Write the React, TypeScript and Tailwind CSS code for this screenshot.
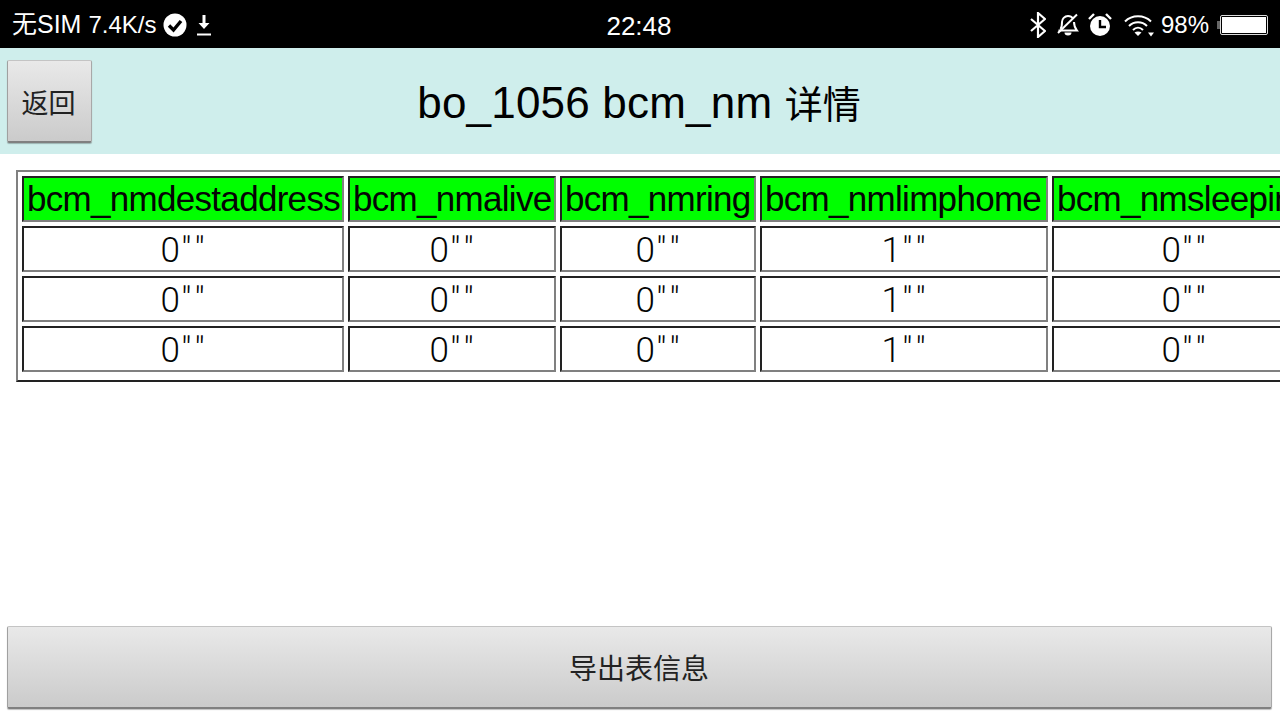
import React from "react";

const font = { fontFamily: '"Liberation Sans","Noto Sans CJK SC",sans-serif' };
const digit = { fontFamily: 'Roboto,"Liberation Sans",sans-serif' };
const widths = ["w-[322px]", "w-[208px]", "w-[196px]", "w-[288px]", "w-[264px]"];
const heads = ["bcm_nmdestaddress", "bcm_nmalive", "bcm_nmring", "bcm_nmlimphome", "bcm_nmsleepind"];
const rows = [
  ["0", "0", "0", "1", "0"],
  ["0", "0", "0", "1", "0"],
  ["0", "0", "0", "1", "0"],
];
const btn =
  "border border-[#c4c4c4] border-b-2 border-b-[#808080] border-r-[#a8a8a8] border-l-[#a0a0a0] rounded-[2px] bg-gradient-to-b from-[#e9e9e9] to-[#cbcbcb] shadow-[0_1px_1px_rgba(0,0,0,0.25)] text-[#222]";
const cell =
  "border-2 border-t-[#222] border-l-[#222] border-b-[#808080] border-r-[#808080] p-0 whitespace-nowrap overflow-hidden";

function StatusLeft() {
  return (
    <div className="flex items-center text-[25px] text-white pl-3 pt-[1px]">
      <span>无SIM</span>
      <span className="ml-[7px] text-[24px]">7.4K/s</span>
      <svg className="ml-[6px]" width="24" height="24" viewBox="0 0 24 24">
        <circle cx="12" cy="12" r="11.500" fill="#fff" />
        <path d="M6 12.500l4.500 4.500 7.500-9" fill="none" stroke="#000" strokeWidth="3.400" />
      </svg>
      <svg className="ml-[8px]" width="18" height="24" viewBox="0 0 18 24">
        <path d="M7.500 2h3v8h4l-5.500 6-5.500-6h4z" fill="#fff" />
        <rect x="2" y="20.500" width="14" height="2" fill="#fff" />
      </svg>
    </div>
  );
}

function StatusRight() {
  return (
    <div className="flex items-center text-white text-[24px] pt-[1px]">
      <svg width="16" height="26" viewBox="0 0 16 26" fill="none" stroke="#fff" strokeWidth="2.200">
        <path d="M1 7l14 12-7 6V1l7 6L1 19" />
      </svg>
      <svg className="ml-[11px]" width="22" height="24" viewBox="0 0 22 24" fill="none" stroke="#fff" strokeWidth="2">
        <path d="M3.500 16c1.500-2 1.500-4 1.500-7 0-3 2.500-6 6-6 2.500 0 4 1 5 2.500M17 9c0 3 1 6 3 8.500H1.500" />
        <path d="M1 20L20 1.500" />
        <path d="M7.500 19.500a3.500 3 0 0 0 7 0z" fill="#fff" stroke="none" />
      </svg>
      <svg className="ml-[9px]" width="24" height="26" viewBox="0 0 24 26">
        <circle cx="12" cy="14" r="10" fill="#fff" />
        <path d="M12 8v7h6" fill="none" stroke="#000" strokeWidth="2.400" />
        <path d="M1 7l5-5M23 7l-5-5" stroke="#fff" strokeWidth="2.400" fill="none" />
      </svg>
      <svg className="ml-[12px]" width="30" height="24" viewBox="0 0 30 24" fill="none" stroke="#fff" strokeWidth="2">
        <path d="M1 8.500c7-7 19-7 26 0M5 13c5-5 13-5 18 0M9 17c3-3 7-3 10 0" />
        <path d="M14 23l-3.500-3.500c2-1.500 5-1.500 7 0z" fill="#fff" stroke="none" />
        <path d="M24 19.500h6l-3 4z" fill="#fff" stroke="none" />
      </svg>
      <span className="ml-[7px]">98%</span>
      <div className="ml-[8px] mr-[12px] flex items-center">
        <div className="w-[3px] h-[8px] bg-[#666]" />
        <div className="w-[48px] h-[20px] rounded-[2px] bg-black border border-[#ddd] p-[1px]">
          <div className="w-full h-full bg-white" />
        </div>
      </div>
    </div>
  );
}

export default function App() {
  return (
    <div className="w-[1280px] h-[720px] bg-white overflow-hidden flex flex-col" style={font}>
      <div className="h-[48px] bg-black flex items-center justify-between relative">
        <StatusLeft />
        <div className="absolute left-0 right-[2px] top-[9px] leading-[34px] text-center text-white text-[26px]">22:48</div>
        <StatusRight />
      </div>
      <div className="h-[106px] bg-[#cfeeec] flex items-center relative">
        <button className={`ml-[7px] mt-[1px] w-[85px] h-[83px] text-[27px] pt-[6px] pr-[2px] ${btn}`}>返回</button>
        <div className="absolute left-0 right-[2px] top-[30px] leading-[50px] text-center text-[44px] tracking-[0.2px] text-black">
          bo_1056 bcm_nm <span className="text-[38px] tracking-normal">详情</span>
        </div>
      </div>
      <div className="flex-1 min-h-0 pt-[16px] pl-[16px] overflow-hidden">
        <div className="w-[1306px] pb-[4px] border-2 border-t-[#808080] border-l-[#808080] border-b-[#222] border-r-[#222]">
          <table className="border-separate border-spacing-[4px] w-[1302px] table-fixed text-[35px] tracking-[-0.7px] text-[#050505]">
            <thead>
              <tr className="h-[46px]">
                {heads.map((h, i) => (
                  <th key={h} className={`${cell} ${widths[i]} bg-[#00ff00] font-normal text-left pl-[3px] leading-[38px]`}>
                    {h}
                  </th>
                ))}
              </tr>
            </thead>
            <tbody>
              {rows.map((r, ri) => (
                <tr key={ri} className="h-[46px]">
                  {r.map((c, i) => (
                    <td key={i} className={`${cell} text-center leading-[38px] pt-[4px] pl-[4px] font-light`} style={digit}>
                      {c}
                      <span className="ml-[2px] tracking-[5px]">""</span>
                    </td>
                  ))}
                </tr>
              ))}
            </tbody>
          </table>
        </div>
      </div>
      <div className="pl-[7px] pr-[8px] pb-[11px]">
        <button className={`w-full h-[83px] text-[28px] pt-[5px] pr-[1px] ${btn}`}>导出表信息</button>
      </div>
    </div>
  );
}
